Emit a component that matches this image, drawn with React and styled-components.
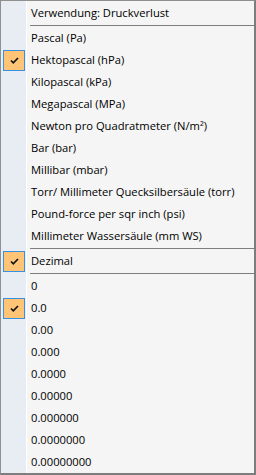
import React from "react";
import styled, { createGlobalStyle } from "styled-components";

const Global = createGlobalStyle`
  html, body { margin: 0; padding: 0; background: #ffffff; }
  body { font-family: "Open Sans", "Noto Sans", sans-serif; }
`;

const Menu = styled.div`
  box-sizing: border-box;
  width: 256px;
  height: 475px;
  border-left: 1px solid #8f8f8f;
  border-top: 1px solid #8f8f8f;
  border-right: 2px solid #7d7d7d;
  border-bottom: 2px solid #7d7d7d;
  padding-top: 1px;
  background: linear-gradient(
    to right,
    #e8edf4 0,
    #e8edf4 25px,
    #ffffff 25px,
    #ffffff 26px,
    #f5f5f5 26px
  );
  display: flex;
  flex-direction: column;
  overflow: hidden;
`;

const Row = styled.div`
  height: 22px;
  display: flex;
  align-items: center;
  flex-shrink: 0;
`;

const IconSlot = styled.div`
  width: 22px;
  height: 21px;
  margin-left: 2px;
  margin-right: 6px;
  box-sizing: border-box;
  display: flex;
  align-items: center;
  justify-content: center;
  background: ${(p) => (p.$checked ? "#ffc476" : "transparent")};
  border: 1px solid ${(p) => (p.$checked ? "#3b8fe0" : "transparent")};
`;

const Label = styled.span`
  font-size: 11.2px;
  color: #000000;
  white-space: nowrap;
  line-height: 1;
`;

const Separator = styled.div`
  height: 3px;
  flex-shrink: 0;
  display: flex;
  align-items: center;
  padding-left: 29px;
  &::after {
    content: "";
    display: block;
    width: 100%;
    height: 1px;
    background: #7f7f7f;
  }
`;

const Check = () => (
  <svg width="9" height="7" viewBox="0 0 9 7">
    <path d="M1 3.5 L3.3 5.8 L8 1" fill="none" stroke="#111" strokeWidth="1.7" />
  </svg>
);

const Item = ({ label, checked }) => (
  <Row>
    <IconSlot $checked={checked}>{checked && <Check />}</IconSlot>
    <Label>{label}</Label>
  </Row>
);

const units = [
  ["Pascal (Pa)", false],
  ["Hektopascal (hPa)", true],
  ["Kilopascal (kPa)", false],
  ["Megapascal (MPa)", false],
  ["Newton pro Quadratmeter (N/m²)", false],
  ["Bar (bar)", false],
  ["Millibar (mbar)", false],
  ["Torr/ Millimeter Quecksilbersäule (torr)", false],
  ["Pound-force per sqr inch (psi)", false],
  ["Millimeter Wassersäule (mm WS)", false],
];

const decimals = [
  ["0", false],
  ["0.0", true],
  ["0.00", false],
  ["0.000", false],
  ["0.0000", false],
  ["0.00000", false],
  ["0.000000", false],
  ["0.0000000", false],
  ["0.00000000", false],
];

export default function App() {
  return (
    <>
      <Global />
      <Menu>
        <Item label="Verwendung: Druckverlust" />
        <Separator />
        {units.map(([l, c]) => (
          <Item key={l} label={l} checked={c} />
        ))}
        <Separator />
        <Item label="Dezimal" checked />
        <Separator />
        {decimals.map(([l, c]) => (
          <Item key={l} label={l} checked={c} />
        ))}
      </Menu>
    </>
  );
}
